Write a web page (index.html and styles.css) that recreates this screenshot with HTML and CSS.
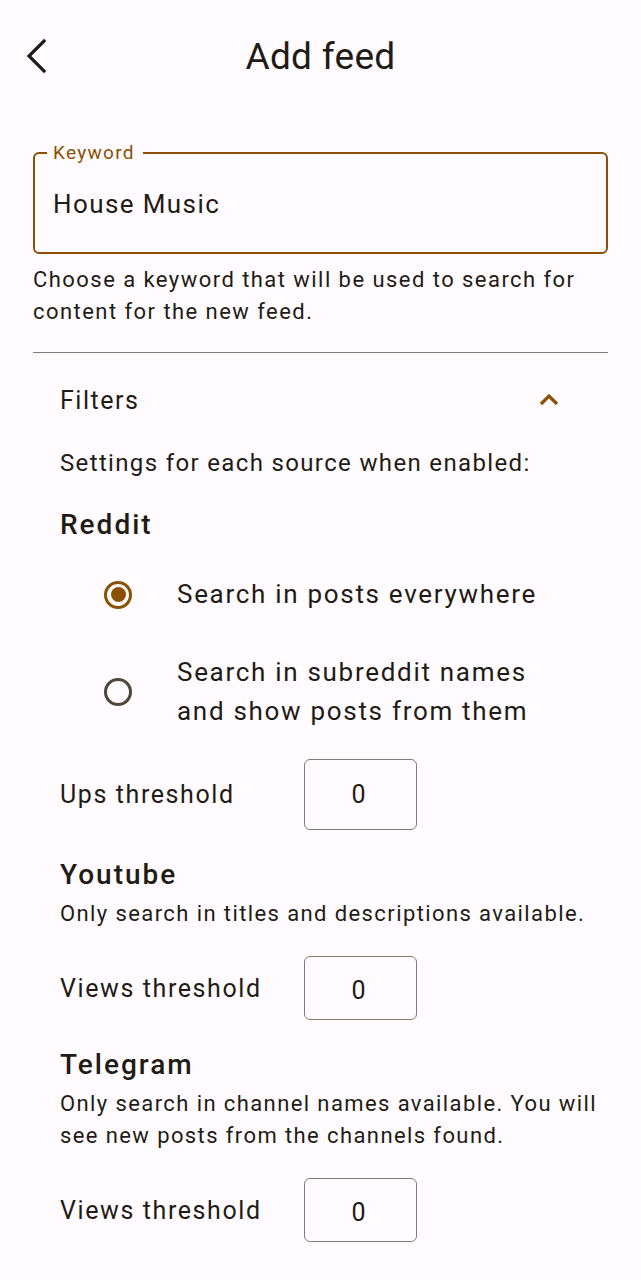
FILE: index.html
```html
<!DOCTYPE html>
<html lang="en">
<head>
<meta charset="utf-8">
<title>Add feed</title>
<link rel="stylesheet" href="styles.css">
</head>
<body>
<header class="topbar">
  <button class="back" aria-label="Back">
    <svg width="24" height="36" viewBox="0 0 24 36"><path d="M19 3 L4 18 L19 33" fill="none" stroke="#1f1b16" stroke-width="3.2" stroke-linecap="square"/></svg>
  </button>
  <h1 class="title">Add feed</h1>
  <span></span>
</header>
<main class="content">
  <fieldset class="field">
    <legend class="field-label">Keyword</legend>
    <div class="field-value">House Music</div>
  </fieldset>
  <p class="helper">Choose a keyword that will be used to search for content for the new feed.</p>
  <hr class="divider">
  <section class="filters">
    <div class="filters-head">
      <span class="filters-title">Filters</span>
      <svg class="chev" width="22" height="14" viewBox="0 0 22 14"><path d="M3 12 L11 4 L19 12" fill="none" stroke="#8b5000" stroke-width="3.2"/></svg>
    </div>
    <p class="intro">Settings for each source when enabled:</p>

    <h2 class="source">Reddit</h2>
    <div class="radios">
      <div class="radio-row">
        <span class="radio checked"></span>
        <span class="radio-text">Search in posts everywhere</span>
      </div>
      <div class="radio-row">
        <span class="radio"></span>
        <span class="radio-text">Search in subreddit names<br>and show posts from them</span>
      </div>
    </div>
    <div class="threshold tall">
      <span class="th-label">Ups threshold</span>
      <span class="th-box">0</span>
    </div>

    <h2 class="source gap">Youtube</h2>
    <p class="desc">Only search in titles and descriptions available.</p>
    <div class="threshold">
      <span class="th-label">Views threshold</span>
      <span class="th-box">0</span>
    </div>

    <h2 class="source gap">Telegram</h2>
    <p class="desc">Only search in channel names available. You will see new posts from the channels found.</p>
    <div class="threshold">
      <span class="th-label">Views threshold</span>
      <span class="th-box">0</span>
    </div>
  </section>
</main>
</body>
</html>
```
FILE: styles.css
```css
* { box-sizing: border-box; }
html, body { margin: 0; padding: 0; }
body {
  background: #fffbfe;
  color: #1f1b16;
  font-family: Roboto, "Noto Sans", sans-serif;
  width: 641px;
}
.topbar {
  height: 112px;
  display: grid;
  grid-template-columns: 1fr auto 1fr;
  align-items: center;
}
.back {
  justify-self: start;
  margin-left: 25px;
  padding: 0;
  border: 0;
  background: none;
  display: flex;
}
.title {
  margin: 0;
  font-size: 37px;
  font-weight: 400;
  letter-spacing: 0.3px;
  color: #1f1b16;
}
.content {
  padding: 0 33px;
}
.field {
  margin: 31px 0 0;
  border: 2px solid #8b5000;
  border-radius: 6px;
  padding: 0 12px 33px;
  min-width: 0;
}
.field-label {
  padding: 0 8px 0 6px;
  font-size: 19px;
  line-height: 20px;
  color: #8b5000;
  letter-spacing: 1.3px;
}
.field-value {
  padding: 26px 0 0 6px;
  font-size: 26px;
  line-height: 30px;
  letter-spacing: 1.4px;
}
.helper {
  margin: 10px 0 0;
  font-size: 22px;
  line-height: 32px;
  letter-spacing: 1.45px;
  color: #1f1b16;
}
.divider {
  margin: 24px 0 0;
  border: 0;
  border-top: 1.5px solid #857a70;
}
.filters {
  padding: 0 0 0 27px;
}
.filters-head {
  margin-top: 23px;
  height: 48px;
  display: flex;
  align-items: center;
  justify-content: space-between;
  padding-right: 48px;
}
.filters-title {
  font-size: 25px;
  letter-spacing: 1.5px;
}
.chev { margin-top: -2px; }
.intro {
  margin: 24px 0 0;
  font-size: 24px;
  line-height: 30px;
  letter-spacing: 1.35px;
}
.source {
  margin: 30px 0 0;
  font-size: 28px;
  line-height: 34px;
  font-weight: 500;
  letter-spacing: 2px;
}
.source.gap { margin-top: 28px; }
.radios {
  margin-top: 33px;
  display: flex;
  flex-direction: column;
  gap: 39px;
}
.radio-row {
  display: flex;
  align-items: center;
}
.radio {
  width: 28px;
  height: 28px;
  margin-left: 44px;
  border-radius: 50%;
  border: 3px solid #4f4539;
  flex: none;
  display: flex;
  align-items: center;
  justify-content: center;
}
.radio.checked { border-color: #8b5000; }
.radio.checked::after {
  content: "";
  width: 15px;
  height: 15px;
  border-radius: 50%;
  background: #8b5000;
}
.radio-text {
  margin-left: 45px;
  font-size: 26px;
  line-height: 39px;
  letter-spacing: 1.7px;
}
.threshold {
  margin-top: 26px;
  display: flex;
  align-items: center;
}
.threshold.tall { margin-top: 28px; }
.th-label {
  width: 244px;
  font-size: 25px;
  letter-spacing: 1.6px;
}
.th-box {
  width: 113px;
  height: 64px;
  border: 1.5px solid #857a70;
  border-radius: 6px;
  display: flex;
  align-items: center;
  justify-content: center;
  font-size: 25px;
  padding: 4px 4px 0 0;
}
.threshold.tall .th-box { height: 71px; padding-top: 0; }
.desc {
  margin: 6px 0 0;
  font-size: 22px;
  line-height: 32px;
  letter-spacing: 1.4px;
}
```
